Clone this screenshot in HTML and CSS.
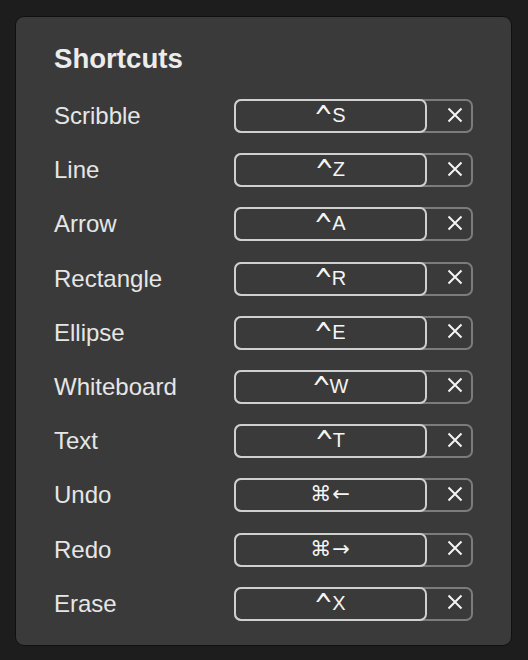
FILE: index.html
```html
<!DOCTYPE html>
<html>
<head>
<meta charset="utf-8">
<link rel="stylesheet" href="styles.css">
</head>
<body>
<div class="panel">
  <h1 class="title">Shortcuts</h1>
  <div class="list">
    <div class="label">Scribble</div>
    <div class="recorder"><div class="field"><span class="mod">^</span>S</div><div class="clear"><svg class="x" viewBox="0 0 16 16"><path d="M1.5 1.5L14.5 14.5M14.5 1.5L1.5 14.5"/></svg></div></div>
    <div class="label">Line</div>
    <div class="recorder"><div class="field"><span class="mod">^</span>Z</div><div class="clear"><svg class="x" viewBox="0 0 16 16"><path d="M1.5 1.5L14.5 14.5M14.5 1.5L1.5 14.5"/></svg></div></div>
    <div class="label">Arrow</div>
    <div class="recorder"><div class="field"><span class="mod">^</span>A</div><div class="clear"><svg class="x" viewBox="0 0 16 16"><path d="M1.5 1.5L14.5 14.5M14.5 1.5L1.5 14.5"/></svg></div></div>
    <div class="label">Rectangle</div>
    <div class="recorder"><div class="field"><span class="mod">^</span>R</div><div class="clear"><svg class="x" viewBox="0 0 16 16"><path d="M1.5 1.5L14.5 14.5M14.5 1.5L1.5 14.5"/></svg></div></div>
    <div class="label">Ellipse</div>
    <div class="recorder"><div class="field"><span class="mod">^</span>E</div><div class="clear"><svg class="x" viewBox="0 0 16 16"><path d="M1.5 1.5L14.5 14.5M14.5 1.5L1.5 14.5"/></svg></div></div>
    <div class="label">Whiteboard</div>
    <div class="recorder"><div class="field"><span class="mod">^</span>W</div><div class="clear"><svg class="x" viewBox="0 0 16 16"><path d="M1.5 1.5L14.5 14.5M14.5 1.5L1.5 14.5"/></svg></div></div>
    <div class="label">Text</div>
    <div class="recorder"><div class="field"><span class="mod">^</span>T</div><div class="clear"><svg class="x" viewBox="0 0 16 16"><path d="M1.5 1.5L14.5 14.5M14.5 1.5L1.5 14.5"/></svg></div></div>
    <div class="label">Undo</div>
    <div class="recorder"><div class="field"><span class="sym">⌘←</span></div><div class="clear"><svg class="x" viewBox="0 0 16 16"><path d="M1.5 1.5L14.5 14.5M14.5 1.5L1.5 14.5"/></svg></div></div>
    <div class="label">Redo</div>
    <div class="recorder"><div class="field"><span class="sym">⌘→</span></div><div class="clear"><svg class="x" viewBox="0 0 16 16"><path d="M1.5 1.5L14.5 14.5M14.5 1.5L1.5 14.5"/></svg></div></div>
    <div class="label">Erase</div>
    <div class="recorder"><div class="field"><span class="mod">^</span>X</div><div class="clear"><svg class="x" viewBox="0 0 16 16"><path d="M1.5 1.5L14.5 14.5M14.5 1.5L1.5 14.5"/></svg></div></div>
  </div>
</div>
</body>
</html>
```
FILE: styles.css
```css
html, body {
  margin: 0;
  padding: 0;
  background: #1d1d1d;
  font-family: "Liberation Sans", Arial, sans-serif;
}
.panel {
  box-sizing: border-box;
  width: 497px;
  height: 630px;
  margin: 16px 0 0 15px;
  padding: 27px 38px 24px 38px;
  background: #3a3a3a;
  border: 1px solid #101010;
  border-radius: 9px;
}
.title {
  margin: 0 0 25px 0;
  font-size: 27.6px;
  line-height: 30px;
  font-weight: bold;
  color: #ececec;
}
.list {
  display: grid;
  grid-template-columns: 1fr 239px;
  grid-auto-rows: 34px;
  row-gap: 20.2px;
  align-items: center;
}
.label {
  font-size: 24px;
  color: #e6e6e6;
  line-height: 28px;
}
.recorder {
  box-sizing: border-box;
  height: 34px;
  display: flex;
  border: 2px solid #7c7c7c;
  border-radius: 7px;
}
.field {
  box-sizing: border-box;
  width: 193px;
  height: 34px;
  margin: -2px 0 -2px -2px;
  border: 2px solid #cfcfcf;
  border-radius: 7px;
  display: flex;
  align-items: center;
  justify-content: center;
  font-family: "Liberation Sans", "DejaVu Sans", sans-serif;
  font-size: 20px;
  line-height: 22px;
  color: #f4f4f4;
  padding-bottom: 2px;
}
.mod {
  display: inline-block;
  font-family: "DejaVu Sans", sans-serif;
  transform: scale(1.15, 1.6);
  transform-origin: 50% 28%;
  margin: 0 0 0 0;
}
.sym {
  font-family: "DejaVu Sans", sans-serif;
  font-size: 21px;
  letter-spacing: 1px;
}
.clear {
  flex: 1;
  display: flex;
  align-items: center;
  justify-content: center;
  padding-left: 12px;
  padding-bottom: 3px;
}
.x {
  width: 16px;
  height: 16px;
  stroke: #f4f4f4;
  stroke-width: 2;
  fill: none;
}
```
